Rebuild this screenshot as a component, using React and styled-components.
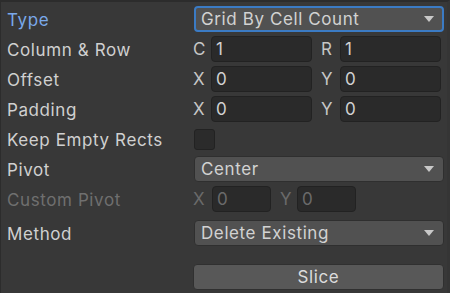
import React from 'react'
import styled, { createGlobalStyle } from 'styled-components'

const Global = createGlobalStyle`
  html, body { margin: 0; padding: 0; background: #383838; }
  body { font-family: Inter, "Noto Sans", sans-serif; }
`

const Panel = styled.div`
  width: 450px;
  height: 293px;
  box-sizing: border-box;
  background: #383838;
  border-top: 2px solid #2c2c2c;
  border-left: 1px solid #2c2c2c;
  border-right: 3px solid #353535;
  padding: 4px 5px 0 6px;
  display: flex;
  flex-direction: column;
  gap: 4px;
  overflow: hidden;
  font-size: 17px;
  letter-spacing: 0.6px;
`
const Row = styled.div`
  display: grid;
  grid-template-columns: 186px 251px;
  align-items: center;
  height: 26px;
  margin-top: ${p => p.$top || 0}px;
`
const Label = styled.div`
  color: ${p => (p.$active ? '#7aa9ea' : p.$disabled ? '#6f6f6f' : '#d0d0d0')};
  padding-top: 2px;
  white-space: nowrap;
`
const Dropdown = styled.div`
  height: ${p => (p.$focus ? 22 : 24)}px;
  box-sizing: content-box;
  background: #515151;
  border: ${p => (p.$focus ? '2px solid #3b7bc4' : '1px solid #2f2f2f')};
  border-radius: 4px;
  display: flex;
  align-items: center;
  justify-content: space-between;
  padding: 0 ${p => (p.$focus ? 8 : 9)}px 0 ${p => (p.$focus ? 5 : 6)}px;
  margin-left: 1px;
  color: #d2d2d2;
`
const Arrow = styled.div`
  width: 0;
  height: 0;
  border-left: 5px solid transparent;
  border-right: 5px solid transparent;
  border-top: 6px solid #c8c8c8;
`
const Pair = styled.div`
  display: grid;
  grid-template-columns: ${p => p.$cols};
  align-items: center;
`
const Sub = styled.div`
  color: ${p => (p.$disabled ? '#6a6a6a' : '#c6c6c6')};
  padding-left: ${p => p.$pad || 0}px;
`
const Field = styled.div`
  height: 24px;
  box-sizing: content-box;
  background: #2a2a2a;
  border: 1px solid #222;
  border-radius: 4px;
  display: flex;
  align-items: center;
  padding-left: 4px;
  color: ${p => (p.$disabled ? '#6a6a6a' : '#d2d2d2')};
`
const Check = styled.div`
  width: 19px;
  height: 19px;
  margin-left: 1px;
  background: #2b2b2b;
  border: 1px solid #222;
  border-radius: 3px;
`
const Button = styled.div`
  height: 24px;
  box-sizing: content-box;
  background: #585858;
  border: 1px solid #303030;
  border-radius: 4px;
  color: #dcdcdc;
  display: flex;
  align-items: center;
  justify-content: center;
`

const Vec = ({ a, b, va, vb, disabled, cols }) => (
  <Pair $cols={cols}>
    <Sub $disabled={disabled}>{a}</Sub>
    <Field $disabled={disabled}>{va}</Field>
    <Sub $disabled={disabled} $pad={9}>{b}</Sub>
    <Field $disabled={disabled}>{vb}</Field>
  </Pair>
)

const App = () => {
  const wide = '18px 101px 28px 101px'
  return (
    <Panel>
      <Global />
      <Row>
        <Label $active>Type</Label>
        <Dropdown $focus>Grid By Cell Count<Arrow /></Dropdown>
      </Row>
      <Row>
        <Label>Column &amp; Row</Label>
        <Vec cols={wide} a="C" b="R" va="1" vb="1" />
      </Row>
      <Row>
        <Label>Offset</Label>
        <Vec cols={wide} a="X" b="Y" va="0" vb="0" />
      </Row>
      <Row>
        <Label>Padding</Label>
        <Vec cols={wide} a="X" b="Y" va="0" vb="0" />
      </Row>
      <Row>
        <Label>Keep Empty Rects</Label>
        <Check />
      </Row>
      <Row>
        <Label>Pivot</Label>
        <Dropdown>Center<Arrow /></Dropdown>
      </Row>
      <Row>
        <Label $disabled>Custom Pivot</Label>
        <Vec cols="19px 59px 26px 59px" a="X" b="Y" va="0" vb="0" disabled />
      </Row>
      <Row $top={4}>
        <Label>Method</Label>
        <Dropdown>Delete Existing<Arrow /></Dropdown>
      </Row>
      <Row $top={14}>
        <span />
        <Button>Slice</Button>
      </Row>
    </Panel>
  )
}

export default App
